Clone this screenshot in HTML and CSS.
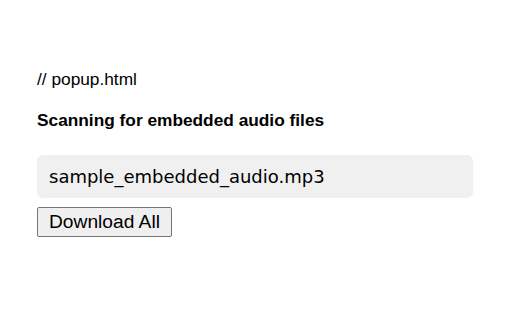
FILE: index.html
```html
<!DOCTYPE html>
<html>
<head>
<meta charset="utf-8">
<link rel="stylesheet" href="styles.css">
</head>
<body>
<div class="page">
  <p class="comment">// popup.html</p>
  <h1 class="title">Scanning for embedded audio files</h1>
  <div class="file">sample_embedded_audio.mp3</div>
  <button class="btn">Download All</button>
</div>
</body>
</html>
```
FILE: styles.css
```css
html, body {
  margin: 0;
  padding: 0;
  background: #ffffff;
}
.page {
  padding: 69px 39px 0 37px;
  font-family: "Liberation Sans", Arial, sans-serif;
  color: #000;
}
.comment {
  margin: 0;
  font-size: 17.3px;
  line-height: 20px;
}
.title {
  margin: 21px 0 0;
  font-size: 17.3px;
  font-weight: bold;
  line-height: 20px;
}
.file {
  margin-top: 25px;
  background: #f0f0f0;
  border-radius: 6px;
  padding: 12px 12px 12px;
  font-family: "DejaVu Sans", Verdana, sans-serif;
  font-size: 18px;
  line-height: 19px;
  height: 19px;
}
.btn {
  display: block;
  margin-top: 9px;
  font-family: "Liberation Sans", Arial, sans-serif;
  font-size: 19.2px;
  line-height: 22px;
  padding: 3px 11px;
  background: #efefef;
  border: 1px solid #767676;
  border-radius: 2px;
  color: #000;
}
```
